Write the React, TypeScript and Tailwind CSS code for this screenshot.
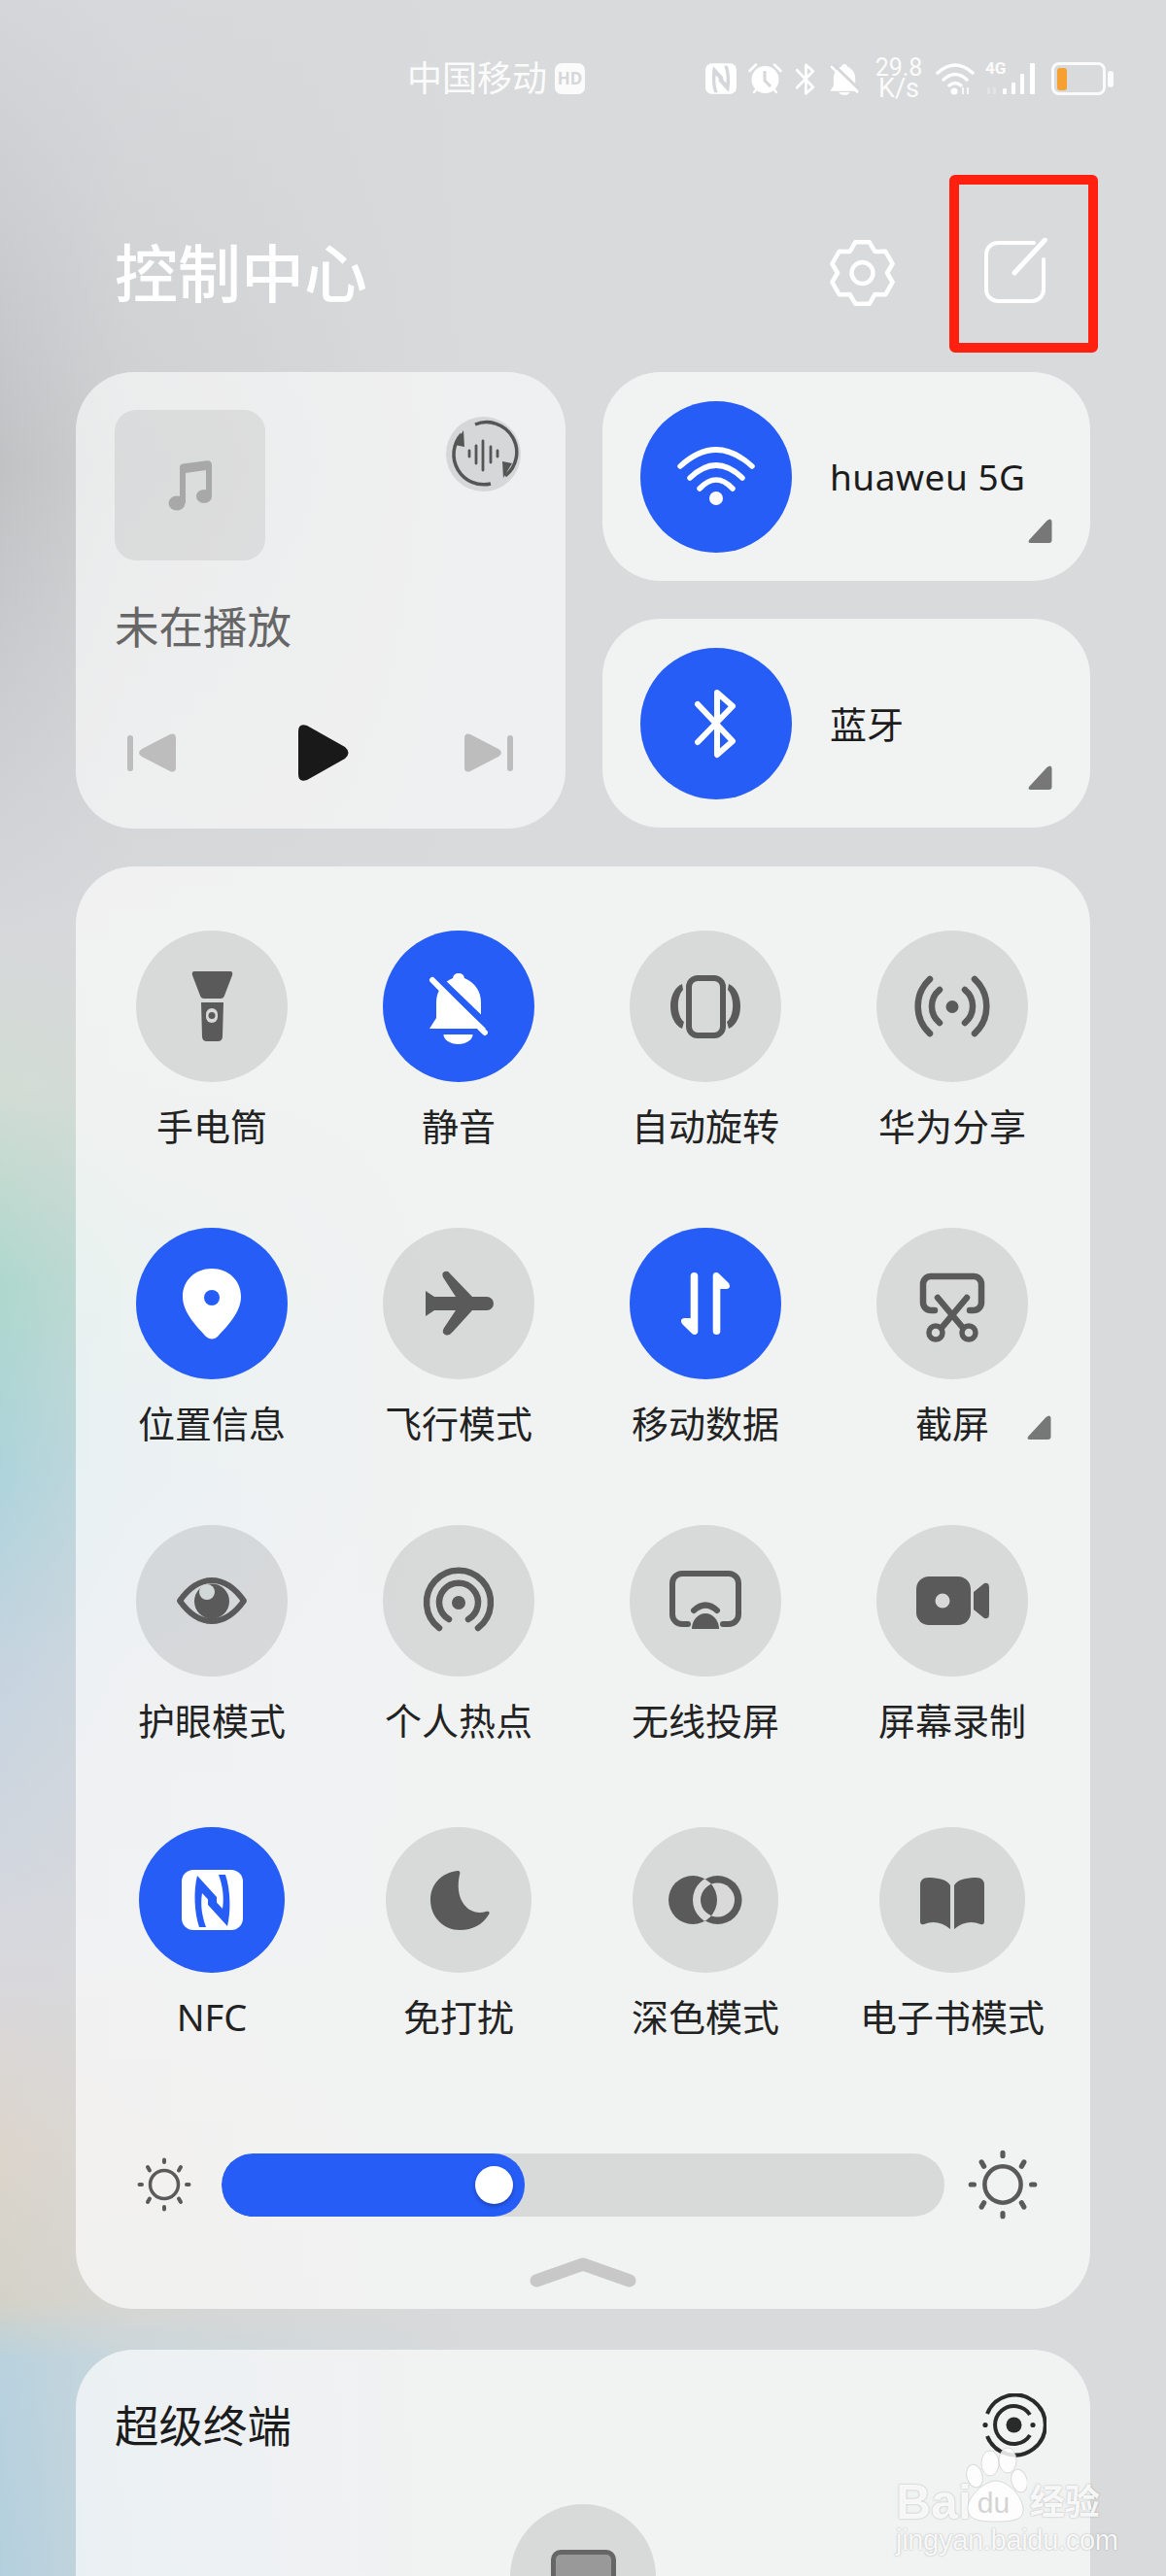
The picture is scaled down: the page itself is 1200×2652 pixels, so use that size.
import type { ReactNode } from "react";

const DARK = "#5a5a5a";
const BLUE = "#265df7";

// six rounded teeth, easier computed than hand written
const gearPath = (() => {
  const cx = 33.5;
  const cy = 35;
  const pts: string[] = [];
  for (let k = 0; k < 6; k++) {
    const a = ((-90 + k * 60) * Math.PI) / 180;
    const at = (off: number, r: number) => {
      const t = a + (off * Math.PI) / 180;
      return `${(cx + r * Math.cos(t)).toFixed(1)} ${(cy + r * Math.sin(t)).toFixed(1)}`;
    };
    pts.push(at(-30, 25.5), at(-13, 32.5), at(13, 32.5));
  }
  return `M${pts.join(" L")}Z`;
})();

const Corner = ({ className }: { className: string }) => (
  <svg viewBox="0 0 25 25" className={`absolute h-[25px] w-[25px] ${className}`}>
    <path d="M24.5 3V22Q24.5 25 21.500 25H3Q-1 25 1.500 21.500L19.500 2Q24 -1.500 24.500 3Z" fill="#777777" />
  </svg>
);

const NfcMark = ({ color }: { color: string }) => (
  <>
    <path d="M60 50L80 72V84L65 68C63 80 65 92 69 103H62C57 88 56 66 60 50Z" fill={color} />
    <path d="M60 50L80 72V84L65 68C63 80 65 92 69 103H62C57 88 56 66 60 50Z" fill={color} transform="rotate(180 75.500 76)" />
  </>
);

const BtPath = ({ width }: { width: number }) => (
  <path d="M59 58L95 96L79 110V46L95 60L59 97" fill="none" stroke="#fff" strokeWidth={width} strokeLinecap="round" strokeLinejoin="round" />
);

const stroke = { fill: "none", stroke: DARK, strokeWidth: 6.5, strokeLinecap: "round", strokeLinejoin: "round" } as const;

const icons: Record<string, ReactNode> = {
  torch: (
    <>
      <path d="M60 42H97Q100 42 99 46L91 67Q90 70 87 70H70Q67 70 66 67L58 46Q57 42 60 42Z" fill={DARK} />
      <path d="M67 74H90L89 109Q89 114 84 114H73Q68 114 68 109Z" fill={DARK} />
      <rect x="72" y="80" width="12" height="15" rx="6" fill="#d8d8d8" />
      <circle cx="78" cy="87.500" r="3.500" fill={DARK} />
    </>
  ),
  bell: (
    <>
      <path d="M78 44a6 6 0 0 1 6 5C94 53 101 62 101 74V90L108 99V101H48L55 90V74C55 62 62 53 72 49a6 6 0 0 1 6-5Z" fill="#fff" />
      <path d="M78 108h15a15 10 0 0 1 -30 0Z" transform="translate(-0.500 -1)" fill="#fff" />
      <path d="M55 47L110 100" stroke={BLUE} strokeWidth="7" />
      <path d="M51 51L105 105" stroke="#fff" strokeWidth="6" strokeLinecap="round" />
    </>
  ),
  rotate: (
    <>
      <rect x="61" y="49" width="35" height="59" rx="9" {...stroke} strokeWidth={6} />
      <path d="M54 55C38 62 38 94 54 101L56 94C48 88 48 68 55 61Z" fill={DARK} />
      <path d="M102 55C118 62 118 94 102 101L100 94C108 88 108 68 101 61Z" fill={DARK} />
    </>
  ),
  share: (
    <>
      <circle cx="78" cy="78.500" r="6.500" fill={DARK} />
      <path d="M55 50A38 38 0 0 0 55 106M65 61A22 22 0 0 0 65 95M101 50A38 38 0 0 1 101 106M91 61A22 22 0 0 1 91 95" {...stroke} />
    </>
  ),
  pin: (
    <>
      <path d="M78 42C95 42 108 54 108 71C108 88 92 103 84 112Q78 117 72 112C64 103 48 88 48 71C48 54 61 42 78 42Z" fill="#fff" />
      <circle cx="78" cy="72" r="8" fill={BLUE} />
    </>
  ),
  plane: (
    <path d="M44 65L53 71H75L62 51Q60 46 64 45Q67 44 69 47L92 71H107a7 7 0 0 1 0 14H92L72 107Q68 112 64 110Q60 108 63 103L75 85H53L44 91Z" fill={DARK} />
  ),
  data: (
    <>
      <path d="M66.500 46a3.800 3.800 0 0 1 3.800 3.800V107a3.500 3.500 0 0 1-6 2L54 99Q51 94 56 93H62.700V49.800a3.800 3.800 0 0 1 3.800-3.800Z" fill="#fff" />
      <path d="M66.500 46a3.800 3.800 0 0 1 3.800 3.800V107a3.500 3.500 0 0 1-6 2L54 99Q51 94 56 93H62.700V49.800a3.800 3.800 0 0 1 3.800-3.800Z" fill="#fff" transform="rotate(180 78 78)" />
    </>
  ),
  shot: (
    <>
      <path d="M60 85H56a8 8 0 0 1-8-8V58a8 8 0 0 1 8-8H100a8 8 0 0 1 8 8V77a8 8 0 0 1-8 8H96" {...stroke} />
      <path d="M63 72L89 103M93 72L67 103" {...stroke} />
      <circle cx="61" cy="108" r="7" {...stroke} strokeWidth={5.5} />
      <circle cx="95" cy="108" r="7" {...stroke} strokeWidth={5.5} />
    </>
  ),
  eye: (
    <>
      <path d="M45 78Q60 57 78 57Q96 57 111 78Q96 99 78 99Q60 99 45 78Z" {...stroke} strokeWidth={6} />
      <circle cx="78" cy="78.500" r="18" fill={DARK} />
      <circle cx="73" cy="69" r="8" fill="#d2d8d8" />
    </>
  ),
  hotspot: (
    <>
      <circle cx="78" cy="80" r="7" fill={DARK} />
      <path d="M68 97A20 20 0 1 1 88 97M58 106A33 33 0 1 1 98 106" {...stroke} />
    </>
  ),
  cast: (
    <>
      <path d="M60 102H54a10 10 0 0 1-10-10V60a10 10 0 0 1 10-10H102a10 10 0 0 1 10 10V92a10 10 0 0 1-10 10H96" {...stroke} strokeWidth={6} />
      <path d="M64 107A14 16 0 0 1 92 107Z" fill={DARK} />
      <path d="M66 88Q78 77 90 88" {...stroke} strokeWidth={6} />
    </>
  ),
  video: (
    <>
      <rect x="41" y="53" width="56" height="50" rx="13" fill={DARK} />
      <circle cx="68" cy="78" r="7.500" fill="#d8d8d8" />
      <path d="M100 69L111 60Q116 59 116 64V92Q116 97 111 96L100 87Z" fill={DARK} />
    </>
  ),
  nfc: (
    <>
      <rect x="44" y="44" width="63" height="62" rx="12" fill="#fff" />
      <NfcMark color={BLUE} />
    </>
  ),
  moon: (
    <path d="M74 45C56 47 46 60 46 75C46 93 60 106 76 106C90 106 100 100 106 90C108 87 105 86 103 87C86 92 70 76 76 49C77 46 76 45 74 45Z" fill={DARK} />
  ),
  dark: (
    <>
      <clipPath id="dark-left">
        <circle cx="62" cy="75" r="25" />
      </clipPath>
      <circle cx="87.500" cy="75" r="25" fill={DARK} />
      <circle cx="87.500" cy="75" r="17.500" fill="#d9d9d9" />
      <circle cx="62" cy="75" r="25" fill={DARK} />
      <circle cx="87.500" cy="75" r="21.500" fill="none" stroke="#d9d9d9" strokeWidth="8" clipPath="url(#dark-left)" />
    </>
  ),
  book: (
    <>
      <path d="M42 60Q42 52 50 52C60 52 70 54 73 60V105C65 98 55 96 46 100Q42 101 42 97Z" fill={DARK} />
      <path d="M108 60Q108 52 100 52C90 52 80 54 77 60V105C85 98 95 96 104 100Q108 101 108 97Z" fill={DARK} />
    </>
  ),
};

type TileData = { label: string; icon: string; active?: boolean; small?: boolean; corner?: boolean };

const tiles: TileData[] = [
  { label: "手电筒", icon: "torch" },
  { label: "静音", icon: "bell", active: true },
  { label: "自动旋转", icon: "rotate" },
  { label: "华为分享", icon: "share" },
  { label: "位置信息", icon: "pin", active: true },
  { label: "飞行模式", icon: "plane" },
  { label: "移动数据", icon: "data", active: true },
  { label: "截屏", icon: "shot", corner: true },
  { label: "护眼模式", icon: "eye" },
  { label: "个人热点", icon: "hotspot" },
  { label: "无线投屏", icon: "cast" },
  { label: "屏幕录制", icon: "video" },
  { label: "NFC", icon: "nfc", active: true, small: true },
  { label: "免打扰", icon: "moon", small: true },
  { label: "深色模式", icon: "dark", small: true },
  { label: "电子书模式", icon: "book", small: true },
];

const Tile = ({ label, icon, active, small, corner }: TileData) => (
  <div className="relative flex flex-col items-center">
    <div
      className={`rounded-full ${small ? "h-[150px] w-[150px]" : "h-[156px] w-[156px]"} ${active ? "bg-[#265df7]" : "bg-black/10"}`}
    >
      <svg viewBox={small ? "0 0 150 150" : "0 0 156 156"} className="h-full w-full">
        {icons[icon]}
      </svg>
    </div>
    <div className="mt-[21px] whitespace-nowrap text-[38px] leading-[48px] text-[#222222]">{label}</div>
    {corner && <Corner className="left-[204px] top-[193px]" />}
  </div>
);

const Sun = ({ size }: { size: number }) => (
  <svg viewBox="0 0 56 56" style={{ width: size, height: size }} className="shrink-0">
    <circle cx="28" cy="28" r="14.500" fill="none" stroke={DARK} strokeWidth="3.500" />
    <g stroke={DARK} strokeWidth="4" strokeLinecap="round">
      <path d="M28 2.500V5M28 51V53.500M2.500 28H5M51 28H53.500" />
      <path d="M11 10L13 13.500M45 10L43 13.500M11 46L13 42.500M45 46L43 42.500" />
    </g>
  </svg>
);

const StatusBar = () => (
  <div className="flex h-[180px] items-start pl-[419px] pt-[59px] text-white">
    <div className="flex h-[44px] items-center">
      <span className="w-[144px] whitespace-nowrap text-[36px] leading-[44px] text-white/90">中国移动</span>
      <span className="ml-[8px] flex h-[32px] w-[31px] items-center justify-center rounded-[7px] bg-white/90 text-[17px] font-bold text-[#d5d7da]">
        HD
      </span>
      <svg viewBox="44 44 63 62" className="ml-[124px] h-[32px] w-[32px]">
        <rect x="44" y="44" width="63" height="62" rx="13" fill="#fff" />
        <NfcMark color="#d5d7da" />
      </svg>
      <svg viewBox="0 0 35 34" className="ml-[12px] h-[34px] w-[35px]">
        <circle cx="17.500" cy="18" r="14" fill="#fff" />
        <path d="M17 9V19L23 25" fill="none" stroke="#d5d7da" strokeWidth="3" />
        <path d="M1.500 9L8 2.500M33.500 9L27 2.500M6 31L8.500 28M29 31L26.500 28" stroke="#fff" strokeWidth="2.500" strokeLinecap="round" />
      </svg>
      <svg viewBox="52 40 50 76" className="ml-[12px] h-[35px] w-[23px]">
        <BtPath width={6} />
      </svg>
      <svg viewBox="48 42 62 68" className="ml-[14px] h-[33px] w-[31px]">
        <path d="M78 44a6 6 0 0 1 6 5C94 53 101 62 101 74V90L108 99V101H48L55 90V74C55 62 62 53 72 49a6 6 0 0 1 6-5Z" fill="#fff" />
        <path d="M66 104H90Q86 110 78 110Q70 110 66 104Z" fill="#fff" />
        <path d="M56 46L110 98" stroke="#d5d7da" strokeWidth="6" />
        <path d="M51 50L105 103" stroke="#fff" strokeWidth="5" strokeLinecap="round" />
      </svg>
      <div className="ml-[16px] flex w-[48px] flex-col items-center font-['Roboto',sans-serif] text-white/90">
        <span className="text-[25px] leading-[21px]">29.8</span>
        <span className="text-[27px] leading-[23px]">K/s</span>
      </div>
      <svg viewBox="0 0 41 34" className="ml-[14px] h-[34px] w-[41px]">
        <g fill="none" stroke="#fff" strokeWidth="3.500" strokeLinecap="round">
          <path d="M2 11Q20 -5 38 11M8 18Q20 7 32 18M14 24Q20 19 26 24" />
        </g>
        <circle cx="19" cy="30" r="3.500" fill="#fff" />
        <path d="M28 33V26M33 33V26" stroke="#fff" strokeWidth="2" opacity="0.8" />
      </svg>
      <div className="relative ml-[10px] h-[34px] w-[54px]">
        <span className="absolute left-0 top-[-3px] font-['Roboto',sans-serif] text-[17px] font-bold leading-[18px] text-white/90">4G</span>
        <svg viewBox="0 0 54 34" className="h-[34px] w-[54px]">
          <rect x="2" y="26" width="3" height="7" fill="#fff" opacity="0.25" />
          <rect x="8" y="26" width="3" height="7" fill="#fff" opacity="0.25" />
          <rect x="18" y="27" width="4" height="6" rx="1" fill="#fff" />
          <rect x="27" y="21" width="4" height="12" rx="1" fill="#fff" />
          <rect x="36" y="12" width="4" height="21" rx="1" fill="#fff" />
          <rect x="46" y="1" width="5" height="32" rx="1" fill="#fff" />
        </svg>
      </div>
      <div className="ml-[14px] flex h-[34px] w-[56px] items-center rounded-[8px] border-[3px] border-white/90 pl-[3px]">
        <div className="h-[23px] w-[10px] rounded-[3px] bg-[#f5a030]" />
      </div>
      <div className="ml-[2px] h-[17px] w-[6px] rounded-[3px] bg-white/90" />
    </div>
  </div>
);

const Header = () => (
  <div className="flex h-[203px] items-center pl-[118px] pr-[122px]">
    <span className="-translate-y-px text-[65px] font-medium leading-[80px] text-white">控制中心</span>
    <svg viewBox="0 0 67 70" className="ml-auto h-[70px] w-[67px] -translate-y-px">
      <path d={gearPath} fill="none" stroke="#fff" strokeWidth="4.500" strokeLinejoin="round" />
      <circle cx="33.500" cy="35" r="11" fill="none" stroke="#fff" strokeWidth="4.500" />
    </svg>
    <svg viewBox="0 0 66 67" className="ml-[91px] h-[67px] w-[66px] -translate-y-[3px]">
      <path d="M52 5H15a12 12 0 0 0-12 12V53a12 12 0 0 0 12 12H50a12 12 0 0 0 12-12V22" fill="none" stroke="#fff" strokeWidth="4" strokeLinecap="round" />
      <path d="M63.500 2L32 36" fill="none" stroke="#fff" strokeWidth="5" strokeLinecap="round" />
    </svg>
  </div>
);

const MusicCard = () => (
  <div className="h-[470px] rounded-[60px] bg-white/60">
    <div className="flex items-start justify-between pl-[40px] pr-[46px] pt-[39px]">
      <div className="flex h-[155px] w-[155px] items-center justify-center rounded-[22px] bg-black/[0.07]">
        <svg viewBox="0 0 46 52" className="h-[52px] w-[46px]">
          <path d="M12 7Q12 4 15 3.500L40 .3Q45 0 45 5V36H39V10L18 13V44H12Z" fill="#a8a8a8" />
          <ellipse cx="9" cy="44" rx="8.500" ry="7.500" fill="#a8a8a8" />
          <ellipse cx="37" cy="37" rx="8" ry="7" fill="#a8a8a8" />
        </svg>
      </div>
      <div className="mt-[7px] h-[77px] w-[77px] rounded-full bg-black/10">
        <svg viewBox="0 0 77 77" className="h-full w-full">
          <g fill="none" stroke="#555555" strokeWidth="3.500">
            <path d="M16 18A31 31 0 0 0 46 69" />
            <path d="M30 8A31 31 0 0 1 61 61" />
          </g>
          <path d="M18 14L19 31L9 29Z" fill="#555555" />
          <path d="M18 14L19 31L9 29Z" fill="#555555" transform="rotate(180 38.500 38.500)" />
          <path d="M24 35V41M31 30V48M38 25V55M46 31V47M53 35V41" stroke="#555555" strokeWidth="2.800" strokeLinecap="round" />
        </svg>
      </div>
    </div>
    <div className="mt-[38px] pl-[40px] text-[45.5px] leading-[60px] text-[#666666]">未在播放</div>
    <div className="mt-[71px] flex items-center pl-[53px]">
      <svg viewBox="0 0 50 40" className="h-[40px] w-[50px]">
        <rect x="0" y="2" width="6" height="37" rx="3" fill="#bdbdbd" />
        <path d="M15 16L44 1Q50 -1 50 5V35Q50 41 44 39L15 24Q9 20 15 16Z" fill="#bdbdbd" />
      </svg>
      <svg viewBox="0 0 53 58" className="ml-[126px] h-[58px] w-[53px]">
        <path d="M0 7Q0 -2 9 1L48 23Q55 29 48 35L9 57Q0 60 0 51Z" fill="#191919" />
      </svg>
      <svg viewBox="0 0 50 40" className="ml-[118px] h-[40px] w-[50px]">
        <rect x="44" y="2" width="6" height="37" rx="3" fill="#bdbdbd" />
        <path d="M35 16L6 1Q0 -1 0 5V35Q0 41 6 39L35 24Q41 20 35 16Z" fill="#bdbdbd" />
      </svg>
    </div>
  </div>
);

const QuickCard = ({ label, children, latin }: { label: string; children: ReactNode; latin?: boolean }) => (
  <div className="relative flex h-[215px] items-center rounded-[60px] bg-white/65 pl-[39px]">
    <div className="h-[156px] w-[156px] rounded-full bg-[#265df7]">
      <svg viewBox="0 0 156 156" className="h-full w-full">
        {children}
      </svg>
    </div>
    <span className={`ml-[39px] whitespace-nowrap leading-[50px] text-[#1c1c1c] ${latin ? "text-[37px] tracking-[0.5px]" : "text-[38px]"}`}>
      {label}
    </span>
    <Corner className="bottom-[39px] right-[39px]" />
  </div>
);

const Watermark = () => (
  <div className="absolute left-[922px] top-[2518px] w-[216px] text-white/90 [text-shadow:0_0_2px_rgba(120,120,120,0.6)]">
    <div className="flex h-[80px] items-end">
      <span className="font-['Liberation_Sans',sans-serif] text-[50px] font-bold leading-[44px]">Bai</span>
      <div className="relative -ml-[7px] h-[80px] w-[64px] shrink-0">
        <svg viewBox="0 0 64 80" className="h-[80px] w-[64px]">
          <g fill="#fff" fillOpacity="0.85" stroke="#bbbbbb" strokeOpacity="0.5">
            <ellipse cx="26" cy="18" rx="9" ry="13" />
            <ellipse cx="44" cy="15" rx="9" ry="13" />
            <ellipse cx="10" cy="31" rx="8" ry="12" transform="rotate(-15 10 31)" />
            <ellipse cx="56" cy="36" rx="8" ry="12" transform="rotate(-15 56 36)" />
            <path d="M32 36C44 36 60 52 60 66C60 76 50 78 32 78C14 78 3 76 3 64C3 52 20 36 32 36Z" />
          </g>
        </svg>
        <span className="absolute bottom-[4px] left-[13px] font-['Liberation_Sans',sans-serif] text-[30px] leading-[34px] text-[#d4d4d4] [text-shadow:none]">du</span>
      </div>
      <span className="ml-[3px] text-[36px] font-bold leading-[44px]">经验</span>
    </div>
    <div className="mt-[2px] whitespace-nowrap font-['Liberation_Sans',sans-serif] text-[29px] leading-[30px] tracking-[-0.3px]">jingyan.baidu.com</div>
  </div>
);

export default function App() {
  return (
    <div className="relative h-[2652px] w-[1200px] overflow-hidden bg-[linear-gradient(to_right,rgba(216,218,219,0)_0,rgba(216,218,219,0.55)_130px,#d8dadb_480px),linear-gradient(to_bottom,#d4d6da_0,#ccced1_200px,#c0c2c4_480px,#d6d7da_950px,#d2dcd4_1120px,#aed8cd_1320px,#aed4dc_1520px,#c6d4e0_1720px,#d8d8dd_2020px,#dcd5cc_2210px,#d4d2c8_2370px,#b8d2de_2430px,#b4d0de_2652px)] [font-family:'Noto_Sans','Noto_Sans_CJK_SC',sans-serif]">
      <StatusBar />
      <Header />

      <div className="px-[78px]">
        <div className="grid grid-cols-[504px_502px] gap-x-[38px]">
          <MusicCard />
          <div className="flex flex-col gap-[39px]">
            <QuickCard label="huaweu 5G" latin>
              <g fill="none" stroke="#fff" strokeWidth="5.500" strokeLinecap="round">
                <path d="M41 67Q78 33 115 67M51 79Q78 53 105 79M61 90Q78 72 95 90" />
              </g>
              <circle cx="78" cy="100" r="7" fill="#fff" />
            </QuickCard>
            <QuickCard label="蓝牙">
              <BtPath width={6} />
            </QuickCard>
          </div>
        </div>

        <div className="mt-[39px] h-[1485px] rounded-[60px] bg-white/65 pt-[66px]">
          <div className="grid grid-cols-[repeat(4,254px)] grid-rows-[306px_306px_311px_221px] pl-[13px]">
            {tiles.map((t) => (
              <Tile key={t.label} {...t} />
            ))}
          </div>
          <div className="mt-[111px] flex items-center pl-[63px]">
            <Sun size={56} />
            <div className="ml-[31px] h-[65px] w-[744px] overflow-hidden rounded-[32px] bg-black/10">
              <div className="flex h-full w-[312px] items-center justify-end rounded-[32px] bg-[#265df7] pr-[12px]">
                <div className="h-[39px] w-[39px] rounded-full bg-white shadow-[0_2px_4px_rgba(0,0,0,0.3)]" />
              </div>
            </div>
            <div className="ml-[24px]">
              <Sun size={72} />
            </div>
          </div>
          <svg viewBox="0 0 110 32" className="mx-auto mt-[39px] block h-[32px] w-[110px]">
            <path d="M7 24L55 7L103 24" fill="none" stroke="#c8c8c8" strokeWidth="13" strokeLinecap="round" strokeLinejoin="round" />
          </svg>
        </div>

        <div className="mt-[42px] h-[400px] rounded-t-[60px] bg-white/65">
          <div className="flex items-center justify-between pl-[40px] pr-[45px] pt-[45px]">
            <span className="text-[45.5px] leading-[66px] text-[#1c1c1c]">超级终端</span>
            <svg viewBox="0 0 66 66" className="h-[66px] w-[66px]">
              <g fill="none" stroke="#2a2a2a" strokeWidth="4">
                <path d="M5 21A31 31 0 1 1 5 44" />
                <path d="M49 22A19.500 19.500 0 1 0 49 43" />
              </g>
              <circle cx="32.500" cy="32.500" r="8" fill="#2a2a2a" />
              <circle cx="3" cy="32.500" r="2.600" fill="#2a2a2a" />
              <circle cx="52" cy="32.500" r="2.600" fill="#2a2a2a" />
            </svg>
          </div>
          <div className="mx-auto mt-[48px] flex h-[150px] w-[150px] justify-center rounded-full bg-black/10 pt-[47px]">
            <div className="h-[60px] w-[67px] rounded-[10px] border-[5px] border-[#666666] bg-[#999999]" />
          </div>
        </div>
      </div>

      <Watermark />
      {/* red annotation box */}
      <div className="absolute left-[977px] top-[180px] h-[183px] w-[153px] rounded-[6px] border-[10px] border-[#ff2010]" />
    </div>
  );
}
